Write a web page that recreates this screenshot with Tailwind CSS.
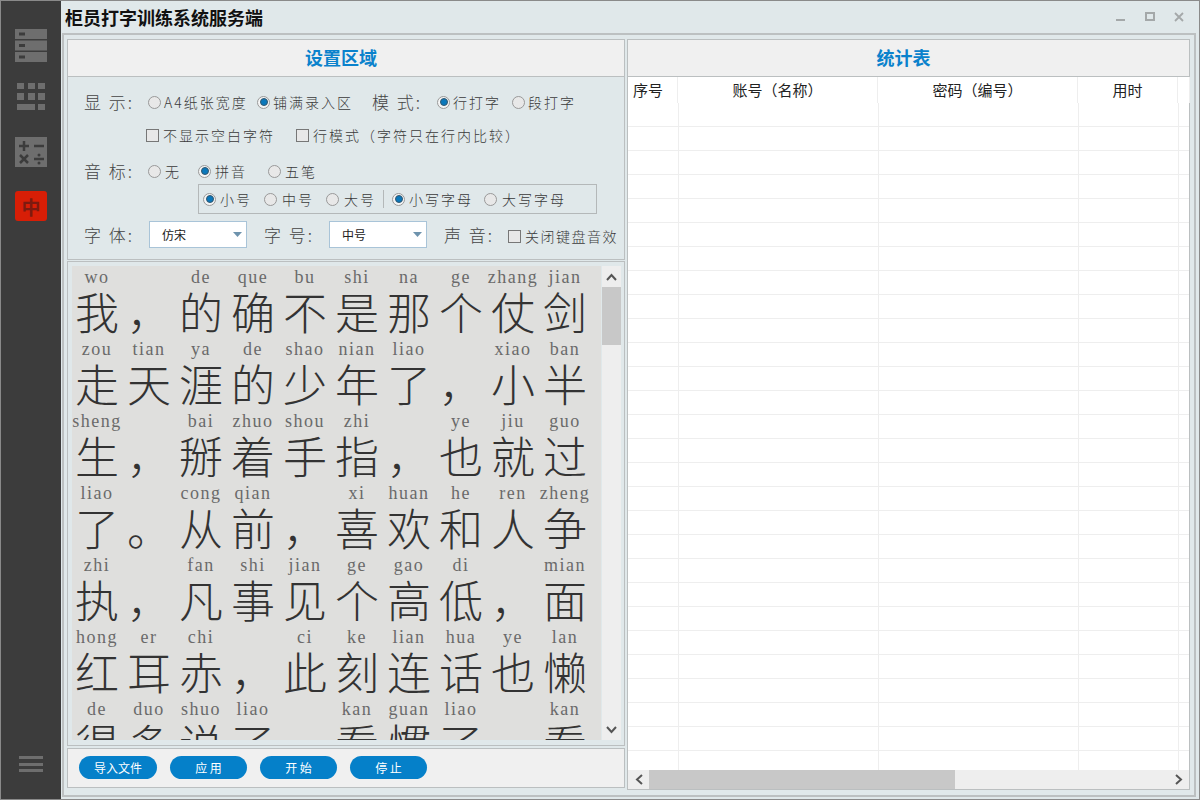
<!DOCTYPE html>
<html lang="zh">
<head>
<meta charset="utf-8">
<title>柜员打字训练系统服务端</title>
<script src="https://cdn.jsdelivr.net/npm/@tailwindcss/browser@4"></script>
</head>
<body class="m-0 overflow-hidden font-['Noto_Sans_CJK_SC','Noto_Sans',sans-serif]">
<div class="flex w-[1200px] h-[800px] bg-[#e0e8ea] border border-[#8a8a8a] overflow-hidden">
  <!-- sidebar -->
  <aside class="w-[60px] shrink-0 bg-[#3c3c3c] flex flex-col items-center pt-[28px] pb-[27px]">
    <svg class="w-[32px] h-[33px]" viewBox="0 0 32 33"><g fill="#6e6e6e"><rect y="0" width="32" height="10"/><rect y="11.500" width="32" height="10"/><rect y="23" width="32" height="10"/></g><g fill="#3c3c3c"><rect x="4" y="3.500" width="6" height="3"/><rect x="4" y="15" width="6" height="3"/><rect x="4" y="26.500" width="6" height="3"/></g></svg>
    <svg class="w-[30px] h-[28px] mt-[21px]" viewBox="0 0 30 28" fill="#6e6e6e"><rect x="1" y="0" width="7" height="6"/><rect x="12" y="0" width="7" height="6"/><rect x="22" y="0" width="7" height="6"/><rect x="1" y="10" width="7" height="7"/><rect x="12" y="10" width="7" height="7"/><rect x="22" y="10" width="7" height="7"/><rect x="1" y="21" width="18" height="6"/><rect x="22" y="21" width="7" height="6"/></svg>
    <svg class="w-[32px] h-[30px] mt-[26px]" viewBox="0 0 32 30"><rect width="32" height="30" fill="#6e6e6e"/><g stroke="#3c3c3c" stroke-width="2.500"><path d="M4 9h10M9 4v10M19 9h10M5 18l8 8M13 18l-8 8M19 22h10"/></g><circle cx="24" cy="18" r="1.500" fill="#3c3c3c"/><circle cx="24" cy="26" r="1.500" fill="#3c3c3c"/></svg>
    <div class="w-[32px] h-[30px] mt-[24px] rounded-[3px] bg-[#d81e06] flex items-center justify-center text-[#7d1a10] text-[19px] font-bold leading-none">中</div>
    <div class="mt-auto w-[24px] flex flex-col gap-[3.500px]">
      <div class="h-[3px] bg-[#6e6e6e]"></div><div class="h-[3px] bg-[#6e6e6e]"></div><div class="h-[3px] bg-[#6e6e6e]"></div>
    </div>
  </aside>

  <div class="flex-1 min-w-0 flex flex-col">
    <!-- title bar -->
    <header class="h-[32px] shrink-0 flex items-center pl-[4px] pr-[15px]">
      <h1 class="text-[18px] leading-none font-bold text-[#111]">柜员打字训练系统服务端</h1>
      <div class="ml-auto flex items-center gap-[19px]">
        <svg class="w-[10px] h-[10px]" viewBox="0 0 10 10"><rect x="0" y="7" width="9" height="2" fill="#a4a8a9"/></svg>
        <svg class="w-[10px] h-[10px]" viewBox="0 0 10 10"><rect x="1" y="1" width="8" height="7" fill="none" stroke="#a4a8a9" stroke-width="2"/></svg>
        <svg class="w-[10px] h-[10px]" viewBox="0 0 10 10"><path d="M1 1l8 8M9 1l-8 8" stroke="#a4a8a9" stroke-width="1.800"/></svg>
      </div>
    </header>

    <!-- frame -->
    <main class="flex-1 min-h-0 ml-[1px] mr-[3px] mb-[2px] border-2 border-[#bcc0c1] pt-[4px] pl-[3px] pr-[3px] pb-[4px] flex gap-[2px]">
      <!-- left column -->
      <section class="w-[558px] shrink-0 flex flex-col gap-[1px]">
        <div class="h-[221px] shrink-0 border border-[#bbbfc0] flex flex-col">
          <div class="h-[37px] shrink-0 bg-[#f0f0f0] border-b border-[#bbbfc0] flex items-center justify-center pr-[10px] pb-[2px] text-[18px] font-bold text-[#0a82cc]">设置区域</div>
          <div class="flex-1 text-[14px] text-[#3a3a3a] tracking-[2px] font-light">
            <div class="h-[14px] mt-[18px] ml-[16px] flex items-center whitespace-nowrap">
              <span class="w-[64px] text-[17px] tracking-[2px] text-[#444]">显 示:</span>
              <span class="w-[13px] h-[13px] rounded-full border border-[#999] bg-[#e8e8e8]"></span><span class="ml-[3px] w-[93px]">A4纸张宽度</span>
              <span class="w-[13px] h-[13px] rounded-full border border-[#999] bg-[#f4f4f4] flex items-center justify-center"><span class="w-[8px] h-[8px] rounded-full bg-[#0a78bb] border border-[#34576e]"></span></span><span class="ml-[3px] w-[99px]">铺满录入区</span>
              <span class="w-[65px] text-[17px] tracking-[2px] text-[#444]">模 式:</span>
              <span class="w-[13px] h-[13px] rounded-full border border-[#999] bg-[#f4f4f4] flex items-center justify-center"><span class="w-[8px] h-[8px] rounded-full bg-[#0a78bb] border border-[#34576e]"></span></span><span class="ml-[3px] w-[59px]">行打字</span>
              <span class="w-[13px] h-[13px] rounded-full border border-[#999] bg-[#e8e8e8]"></span><span class="ml-[3px]">段打字</span>
            </div>
            <div class="h-[14px] mt-[19px] ml-[78px] flex items-center whitespace-nowrap">
              <span class="w-[13px] h-[13px] border border-[#777] bg-[#e8e8e8]"></span><span class="ml-[4px] w-[133px]">不显示空白字符</span>
              <span class="w-[13px] h-[13px] border border-[#777] bg-[#e8e8e8]"></span><span class="ml-[4px]">行模式（字符只在行内比较）</span>
            </div>
            <div class="h-[14px] mt-[22px] ml-[16px] flex items-center whitespace-nowrap">
              <span class="w-[64px] text-[17px] tracking-[2px] text-[#444]">音 标:</span>
              <span class="w-[13px] h-[13px] rounded-full border border-[#999] bg-[#e8e8e8]"></span><span class="ml-[4px] w-[33px]">无</span>
              <span class="w-[13px] h-[13px] rounded-full border border-[#999] bg-[#f4f4f4] flex items-center justify-center"><span class="w-[8px] h-[8px] rounded-full bg-[#0a78bb] border border-[#34576e]"></span></span><span class="ml-[4px] w-[53px]">拼音</span>
              <span class="w-[13px] h-[13px] rounded-full border border-[#999] bg-[#e8e8e8]"></span><span class="ml-[4px]">五笔</span>
            </div>
            <div class="h-[30px] w-[399px] mt-[6px] ml-[130px] border border-[#b4b8b9] flex items-center pl-[4px] whitespace-nowrap">
              <span class="w-[13px] h-[13px] rounded-full border border-[#999] bg-[#f4f4f4] flex items-center justify-center"><span class="w-[8px] h-[8px] rounded-full bg-[#0a78bb] border border-[#34576e]"></span></span><span class="ml-[4px] w-[44px]">小号</span>
              <span class="w-[13px] h-[13px] rounded-full border border-[#999] bg-[#e8e8e8]"></span><span class="ml-[5px] w-[44px]">中号</span>
              <span class="w-[13px] h-[13px] rounded-full border border-[#999] bg-[#e8e8e8]"></span><span class="ml-[5px] w-[39px]">大号</span>
              <span class="w-px h-[18px] bg-[#b4b8b9] mr-[8px]"></span>
              <span class="w-[13px] h-[13px] rounded-full border border-[#999] bg-[#f4f4f4] flex items-center justify-center"><span class="w-[8px] h-[8px] rounded-full bg-[#0a78bb] border border-[#34576e]"></span></span><span class="ml-[4px] w-[75px]">小写字母</span>
              <span class="w-[13px] h-[13px] rounded-full border border-[#999] bg-[#e8e8e8]"></span><span class="ml-[5px]">大写字母</span>
            </div>
            <div class="h-[27px] mt-[7px] ml-[16px] flex items-center whitespace-nowrap">
              <span class="w-[65px] text-[17px] tracking-[2px] text-[#444]">字 体:</span>
              <div class="w-[98px] h-[27px] bg-white border border-[#a9c4d8] flex items-center pl-[12px] pr-[4px] text-[12px] tracking-normal font-normal text-[#222]">仿宋<svg class="ml-auto w-[9px] h-[5px]" viewBox="0 0 9 5"><path d="M0 0h9L4.500 5z" fill="#6e93ad"/></svg></div>
              <span class="ml-[17px] w-[65px] text-[17px] tracking-[2px] text-[#444]">字 号:</span>
              <div class="w-[98px] h-[27px] bg-white border border-[#a9c4d8] flex items-center pl-[12px] pr-[4px] text-[12px] tracking-normal font-normal text-[#222]">中号<svg class="ml-auto w-[9px] h-[5px]" viewBox="0 0 9 5"><path d="M0 0h9L4.500 5z" fill="#6e93ad"/></svg></div>
              <span class="ml-[17px] w-[64px] text-[17px] tracking-[2px] text-[#444]">声 音:</span>
              <span class="mt-[3px] w-[13px] h-[13px] border border-[#777] bg-[#e8e8e8]"></span><span class="mt-[3px] ml-[4px] tracking-[1.500px]">关闭键盘音效</span>
            </div>
          </div>
        </div>

        <!-- typing text -->
        <div class="h-[485px] shrink-0 border border-[#bbbfc0] pt-[4px] pl-[4px] pr-[3px] flex">
          <div class="w-[529px] h-[474px] bg-[#dfdfdd] overflow-hidden text-[#333]">
            <div class="-ml-[1px] font-light">
              <div class="grid grid-cols-[repeat(10,52px)] h-[22px] leading-[23px] text-center text-[18px] tracking-[1.500px] text-[#6a6a6a] font-['Liberation_Serif',serif]"><span>wo</span><span></span><span>de</span><span>que</span><span>bu</span><span>shi</span><span>na</span><span>ge</span><span>zhang</span><span>jian</span></div>
              <div class="grid grid-cols-[repeat(10,52px)] h-[50px] leading-[46px] text-center text-[44px]"><span>我</span><span>，</span><span>的</span><span>确</span><span>不</span><span>是</span><span>那</span><span>个</span><span>仗</span><span>剑</span></div>
              <div class="grid grid-cols-[repeat(10,52px)] h-[22px] leading-[23px] text-center text-[18px] tracking-[1.500px] text-[#6a6a6a] font-['Liberation_Serif',serif]"><span>zou</span><span>tian</span><span>ya</span><span>de</span><span>shao</span><span>nian</span><span>liao</span><span></span><span>xiao</span><span>ban</span></div>
              <div class="grid grid-cols-[repeat(10,52px)] h-[50px] leading-[46px] text-center text-[44px]"><span>走</span><span>天</span><span>涯</span><span>的</span><span>少</span><span>年</span><span>了</span><span>，</span><span>小</span><span>半</span></div>
              <div class="grid grid-cols-[repeat(10,52px)] h-[22px] leading-[23px] text-center text-[18px] tracking-[1.500px] text-[#6a6a6a] font-['Liberation_Serif',serif]"><span>sheng</span><span></span><span>bai</span><span>zhuo</span><span>shou</span><span>zhi</span><span></span><span>ye</span><span>jiu</span><span>guo</span></div>
              <div class="grid grid-cols-[repeat(10,52px)] h-[50px] leading-[46px] text-center text-[44px]"><span>生</span><span>，</span><span>掰</span><span>着</span><span>手</span><span>指</span><span>，</span><span>也</span><span>就</span><span>过</span></div>
              <div class="grid grid-cols-[repeat(10,52px)] h-[22px] leading-[23px] text-center text-[18px] tracking-[1.500px] text-[#6a6a6a] font-['Liberation_Serif',serif]"><span>liao</span><span></span><span>cong</span><span>qian</span><span></span><span>xi</span><span>huan</span><span>he</span><span>ren</span><span>zheng</span></div>
              <div class="grid grid-cols-[repeat(10,52px)] h-[50px] leading-[46px] text-center text-[44px]"><span>了</span><span>。</span><span>从</span><span>前</span><span>，</span><span>喜</span><span>欢</span><span>和</span><span>人</span><span>争</span></div>
              <div class="grid grid-cols-[repeat(10,52px)] h-[22px] leading-[23px] text-center text-[18px] tracking-[1.500px] text-[#6a6a6a] font-['Liberation_Serif',serif]"><span>zhi</span><span></span><span>fan</span><span>shi</span><span>jian</span><span>ge</span><span>gao</span><span>di</span><span></span><span>mian</span></div>
              <div class="grid grid-cols-[repeat(10,52px)] h-[50px] leading-[46px] text-center text-[44px]"><span>执</span><span>，</span><span>凡</span><span>事</span><span>见</span><span>个</span><span>高</span><span>低</span><span>，</span><span>面</span></div>
              <div class="grid grid-cols-[repeat(10,52px)] h-[22px] leading-[23px] text-center text-[18px] tracking-[1.500px] text-[#6a6a6a] font-['Liberation_Serif',serif]"><span>hong</span><span>er</span><span>chi</span><span></span><span>ci</span><span>ke</span><span>lian</span><span>hua</span><span>ye</span><span>lan</span></div>
              <div class="grid grid-cols-[repeat(10,52px)] h-[50px] leading-[46px] text-center text-[44px]"><span>红</span><span>耳</span><span>赤</span><span>，</span><span>此</span><span>刻</span><span>连</span><span>话</span><span>也</span><span>懒</span></div>
              <div class="grid grid-cols-[repeat(10,52px)] h-[22px] leading-[23px] text-center text-[18px] tracking-[1.500px] text-[#6a6a6a] font-['Liberation_Serif',serif]"><span>de</span><span>duo</span><span>shuo</span><span>liao</span><span></span><span>kan</span><span>guan</span><span>liao</span><span></span><span>kan</span></div>
              <div class="grid grid-cols-[repeat(10,52px)] h-[50px] leading-[46px] text-center text-[44px]"><span>得</span><span>多</span><span>说</span><span>了</span><span>，</span><span>看</span><span>惯</span><span>了</span><span>，</span><span>看</span></div>
            </div>
          </div>
          <!-- vertical scrollbar -->
          <div class="ml-[1px] w-[19px] h-[474px] bg-[#eeeeee] flex flex-col">
            <div class="h-[21px] flex items-center justify-center"><svg class="w-[11px] h-[8px]" viewBox="0 0 11 8"><path d="M1 7l4.500-5L10 7" fill="none" stroke="#555" stroke-width="2"/></svg></div>
            <div class="h-[58px] bg-[#c8c8c8]"></div>
            <div class="mt-auto h-[21px] flex items-center justify-center"><svg class="w-[11px] h-[8px]" viewBox="0 0 11 8"><path d="M1 1l4.500 5L10 1" fill="none" stroke="#555" stroke-width="2"/></svg></div>
          </div>
        </div>

        <!-- buttons -->
        <div class="h-[40px] mt-[1px] pb-[1px] shrink-0 bg-[#f0f0f0] border border-[#bbbfc0] flex items-center pl-[11px] gap-[13px] text-[12px] text-white">
          <button class="w-[78px] h-[23px] rounded-full bg-[#0580c9]">导入文件</button>
          <button class="w-[77px] h-[23px] rounded-full bg-[#0580c9]">应 用</button>
          <button class="w-[77px] h-[23px] rounded-full bg-[#0580c9]">开 始</button>
          <button class="w-[77px] h-[23px] rounded-full bg-[#0580c9]">停 止</button>
        </div>
      </section>

      <!-- right panel -->
      <section class="w-[563px] h-[751px] shrink-0 border border-[#bbbfc0] bg-white flex flex-col">
        <div class="h-[37px] shrink-0 bg-[#f0f0f0] border-b border-[#bbbfc0] flex items-center justify-center pr-[10px] pb-[2px] text-[18px] font-bold text-[#0a82cc]">统计表</div>
        <div class="h-[26px] shrink-0 grid grid-cols-[50px_200px_200px_100px_12px] text-[15px] text-[#222] text-center leading-[26px] [&>span]:border-r [&>span]:border-[#eeeeee]"><span class="text-left pl-[5px]">序号</span><span>账号（名称）</span><span>密码（编号）</span><span>用时</span><span></span></div>
        <div class="flex-1 min-h-0 overflow-hidden [&>div]:h-[24px] [&>div]:border-b [&>div]:border-[#eeeeee] [&>div]:grid [&>div]:grid-cols-[51px_200px_200px_100px_11px] [&>div>span]:border-r [&>div>span]:border-[#eeeeee]">
          <div><span></span><span></span><span></span><span></span><span></span></div>
          <div><span></span><span></span><span></span><span></span><span></span></div>
          <div><span></span><span></span><span></span><span></span><span></span></div>
          <div><span></span><span></span><span></span><span></span><span></span></div>
          <div><span></span><span></span><span></span><span></span><span></span></div>
          <div><span></span><span></span><span></span><span></span><span></span></div>
          <div><span></span><span></span><span></span><span></span><span></span></div>
          <div><span></span><span></span><span></span><span></span><span></span></div>
          <div><span></span><span></span><span></span><span></span><span></span></div>
          <div><span></span><span></span><span></span><span></span><span></span></div>
          <div><span></span><span></span><span></span><span></span><span></span></div>
          <div><span></span><span></span><span></span><span></span><span></span></div>
          <div><span></span><span></span><span></span><span></span><span></span></div>
          <div><span></span><span></span><span></span><span></span><span></span></div>
          <div><span></span><span></span><span></span><span></span><span></span></div>
          <div><span></span><span></span><span></span><span></span><span></span></div>
          <div><span></span><span></span><span></span><span></span><span></span></div>
          <div><span></span><span></span><span></span><span></span><span></span></div>
          <div><span></span><span></span><span></span><span></span><span></span></div>
          <div><span></span><span></span><span></span><span></span><span></span></div>
          <div><span></span><span></span><span></span><span></span><span></span></div>
          <div><span></span><span></span><span></span><span></span><span></span></div>
          <div><span></span><span></span><span></span><span></span><span></span></div>
          <div><span></span><span></span><span></span><span></span><span></span></div>
          <div><span></span><span></span><span></span><span></span><span></span></div>
          <div><span></span><span></span><span></span><span></span><span></span></div>
          <div><span></span><span></span><span></span><span></span><span></span></div>
          <div><span></span><span></span><span></span><span></span><span></span></div>
        </div>
        <div class="h-[19px] shrink-0 bg-[#eeeeee] flex items-center">
          <div class="w-[21px] flex items-center justify-center"><svg class="w-[8px] h-[11px]" viewBox="0 0 8 11"><path d="M7 1L2 5.500 7 10" fill="none" stroke="#555" stroke-width="2"/></svg></div>
          <div class="w-[306px] h-full bg-[#c8c8c8]"></div>
          <div class="ml-auto w-[21px] flex items-center justify-center"><svg class="w-[8px] h-[11px]" viewBox="0 0 8 11"><path d="M1 1l5 4.500L1 10" fill="none" stroke="#555" stroke-width="2"/></svg></div>
        </div>
      </section>
    </main>
  </div>
</div>
</body>
</html>
